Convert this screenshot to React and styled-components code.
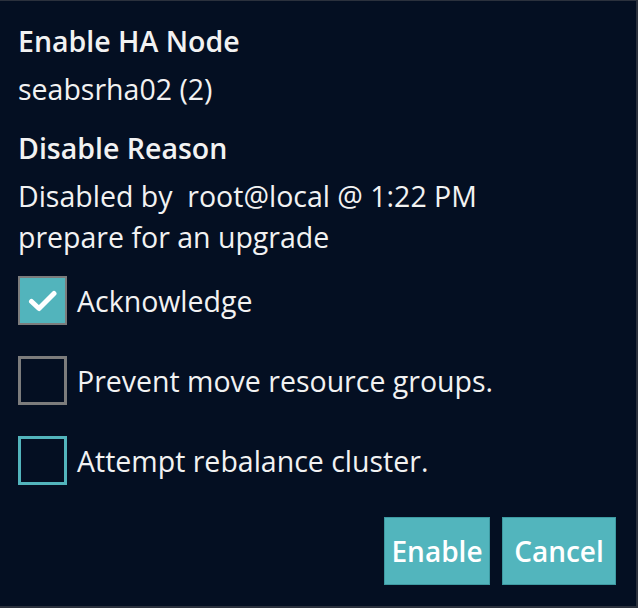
import React, { useState } from 'react';
import styled, { createGlobalStyle } from 'styled-components';

const GlobalStyle = createGlobalStyle`
  html, body {
    margin: 0;
    padding: 0;
    background: #040f22;
  }
  body {
    font-family: "Open Sans", "Noto Sans", sans-serif;
  }
`;

const Panel = styled.div`
  box-sizing: border-box;
  width: 638px;
  height: 608px;
  background: #040f22;
  border-top: 1px solid #2b313d;
  border-right: 2px solid #2b313d;
  border-bottom: 2px solid #2b313d;
  padding: 21px 20px 0 18px;
  color: #f2f2f2;
  display: flex;
  flex-direction: column;
`;

const Heading = styled.h2`
  margin: 0 0 ${(props) => props.gap || 0}px 0;
  font-size: 28.5px;
  font-weight: 600;
  line-height: 38px;
`;

const Text = styled.p`
  margin: 0 0 ${(props) => props.gap || 0}px 0;
  font-size: 28.5px;
  font-weight: 400;
  line-height: ${(props) => props.lh || 38}px;
`;

const OptionList = styled.div`
  display: flex;
  flex-direction: column;
  gap: 31px;
  margin-top: 18px;
`;

const Option = styled.label`
  display: flex;
  align-items: center;
  gap: 10px;
  font-size: 28.5px;
  line-height: 38px;
  cursor: pointer;
`;

const Box = styled.span`
  box-sizing: border-box;
  flex: none;
  width: 49px;
  height: 49px;
  display: flex;
  align-items: center;
  justify-content: center;
  background: ${(props) => (props.checked ? '#52b4bc' : 'transparent')};
  border: ${(props) => (props.checked ? '2px' : '3px')} solid
    ${(props) => (props.focused ? '#52b4bc' : '#7c7c7c')};
`;

const Actions = styled.div`
  display: flex;
  justify-content: flex-end;
  gap: 12px;
  margin-top: 32px;
`;

const Button = styled.button`
  box-sizing: border-box;
  height: 68px;
  padding: 0;
  width: ${(props) => props.width}px;
  background: #52b5bd;
  border: 1px solid #3e9aa2;
  color: #ffffff;
  font-family: inherit;
  font-size: 28px;
  font-weight: 600;
  cursor: pointer;
`;

function Check({ checked, focused }) {
  return (
    <Box checked={checked} focused={focused}>
      {checked && (
        <svg width="29" height="22" viewBox="0 0 29 22">
          <path d="M3.5 11.5 L11 18.5 L26 3.5" stroke="#fff" strokeWidth="5" fill="none" strokeLinecap="round" strokeLinejoin="round" />
        </svg>
      )}
    </Box>
  );
}

export default function App() {
  const [opts] = useState([
    { label: 'Acknowledge', checked: true },
    { label: 'Prevent move resource groups.', checked: false },
    { label: 'Attempt rebalance cluster.', checked: false, focused: true },
  ]);

  return (
    <>
      <GlobalStyle />
      <Panel>
        <Heading gap={10}>Enable HA Node</Heading>
        <Text gap={21}>seabsrha02 (2)</Text>
        <Heading gap={9}>Disable Reason</Heading>
        <Text lh={41}>Disabled by&nbsp; root@local @ 1:22 PM</Text>
        <Text lh={41}>prepare for an upgrade</Text>
        <OptionList>
          {opts.map((o) => (
            <Option key={o.label}>
              <Check checked={o.checked} focused={o.focused} />
              {o.label}
            </Option>
          ))}
        </OptionList>
        <Actions>
          <Button width={106}>Enable</Button>
          <Button width={114}>Cancel</Button>
        </Actions>
      </Panel>
    </>
  );
}
